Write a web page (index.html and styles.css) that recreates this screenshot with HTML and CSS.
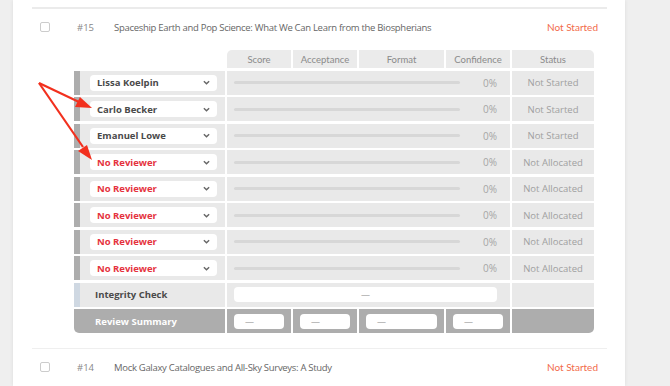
FILE: index.html
```html
<!DOCTYPE html>
<html lang="en">
<head>
    <meta charset="UTF-8">
    <meta name="viewport" content="width=device-width, initial-scale=1.0">
    <title>Submissions</title>
    <link rel="stylesheet" href="styles.css">
</head>
<body>
    <div class="page">
        <div class="card">
            <div class="item">
                <div class="item-head">
                    <span class="check"></span>
                    <span class="num">#15</span>
                    <span class="title">Spaceship Earth and Pop Science: What We Can Learn from the Biospherians</span>
                    <span class="state">Not Started</span>
                </div>

                <div class="review-grid">
                    <div class="blank"></div>
                    <div class="head first">Score</div>
                    <div class="head">Acceptance</div>
                    <div class="head">Format</div>
                    <div class="head">Confidence</div>
                    <div class="head last">Status</div>

                    <div class="reviewer"><div class="select">Lissa Koelpin<svg viewBox="0 0 8 5"><polyline points="1,1 4,4 7,1"/></svg></div></div>
                    <div class="progress"><span class="bar"></span><span class="pct">0%</span></div>
                    <div class="status">Not Started</div>

                    <div class="reviewer"><div class="select">Carlo Becker<svg viewBox="0 0 8 5"><polyline points="1,1 4,4 7,1"/></svg></div></div>
                    <div class="progress"><span class="bar"></span><span class="pct">0%</span></div>
                    <div class="status">Not Started</div>

                    <div class="reviewer"><div class="select">Emanuel Lowe<svg viewBox="0 0 8 5"><polyline points="1,1 4,4 7,1"/></svg></div></div>
                    <div class="progress"><span class="bar"></span><span class="pct">0%</span></div>
                    <div class="status">Not Started</div>

                    <div class="reviewer"><div class="select none">No Reviewer<svg viewBox="0 0 8 5"><polyline points="1,1 4,4 7,1"/></svg></div></div>
                    <div class="progress"><span class="bar"></span><span class="pct">0%</span></div>
                    <div class="status">Not Allocated</div>

                    <div class="reviewer"><div class="select none">No Reviewer<svg viewBox="0 0 8 5"><polyline points="1,1 4,4 7,1"/></svg></div></div>
                    <div class="progress"><span class="bar"></span><span class="pct">0%</span></div>
                    <div class="status">Not Allocated</div>

                    <div class="reviewer"><div class="select none">No Reviewer<svg viewBox="0 0 8 5"><polyline points="1,1 4,4 7,1"/></svg></div></div>
                    <div class="progress"><span class="bar"></span><span class="pct">0%</span></div>
                    <div class="status">Not Allocated</div>

                    <div class="reviewer"><div class="select none">No Reviewer<svg viewBox="0 0 8 5"><polyline points="1,1 4,4 7,1"/></svg></div></div>
                    <div class="progress"><span class="bar"></span><span class="pct">0%</span></div>
                    <div class="status">Not Allocated</div>

                    <div class="reviewer"><div class="select none">No Reviewer<svg viewBox="0 0 8 5"><polyline points="1,1 4,4 7,1"/></svg></div></div>
                    <div class="progress"><span class="bar"></span><span class="pct">0%</span></div>
                    <div class="status">Not Allocated</div>

                    <div class="reviewer integrity">Integrity Check</div>
                    <div class="progress"><span class="box wide">&mdash;</span></div>
                    <div class="status"></div>

                    <div class="summary label">Review Summary</div>
                    <div class="summary"><span class="box">&mdash;</span></div>
                    <div class="summary"><span class="box">&mdash;</span></div>
                    <div class="summary"><span class="box">&mdash;</span></div>
                    <div class="summary"><span class="box">&mdash;</span></div>
                    <div class="summary end"></div>
                </div>
            </div>

            <div class="item">
                <div class="item-head">
                    <span class="check"></span>
                    <span class="num">#14</span>
                    <span class="title">Mock Galaxy Catalogues and All-Sky Surveys: A Study</span>
                    <span class="state">Not Started</span>
                </div>
            </div>
        </div>

        <!-- annotation arrows -->
        <svg class="arrows" width="670" height="386" viewBox="0 0 670 386">
            <line x1="39" y1="83" x2="79" y2="102"/>
            <polygon points="92,108 75,107 80,97"/>
            <line x1="39" y1="83" x2="83" y2="147"/>
            <polygon points="92,160 78,151 87,145"/>
        </svg>
    </div>
</body>
</html>
```

FILE: styles.css
```css
body {
    margin: 0;
    background-color: #efefef;
    font-family: 'Open Sans', 'Noto Sans', Arial, sans-serif;
    color: #666;
}
.page {
    position: relative;
    width: 670px;
    height: 386px;
    overflow: hidden;
}
.card {
    background-color: #fff;
    margin-left: 13px;
    width: 612px;
    height: 386px;
    padding: 7px 18px 0 19px;
    box-sizing: border-box;
    box-shadow: 0 0 4px rgba(0, 0, 0, 0.08);
}
.item {
    border-top: 2px solid #ebebeb;
    padding-bottom: 15px;
}
.item + .item {
    border-top: 1px solid #efefef;
}
.item-head {
    display: flex;
    align-items: center;
    height: 36px;
    font-size: 9.5px;
    letter-spacing: -0.3px;
}
.check {
    width: 8px;
    height: 8px;
    border: 1px solid #ccc;
    border-radius: 2px;
    margin-left: 8px;
}
.num {
    margin-left: 27px;
    width: 37px;
    color: #888;
    letter-spacing: 0;
}
.title {
    flex: 1;
    color: #666;
}
.state {
    font-family: Lato, 'Open Sans', sans-serif;
    font-size: 10px;
    letter-spacing: 0;
    color: #f26b4a;
    margin-right: 9px;
}

/* reviewer table */
.review-grid {
    display: grid;
    grid-template-columns: 151px 64px 64px 85px 64px 82px;
    grid-template-rows: 18px repeat(10, 24px);
    column-gap: 2px;
    row-gap: 2.5px;
    margin: 5px 0 0 42px;
    font-size: 9.5px;
}
.review-grid .head {
    background-color: #ebebeb;
    color: #8a8a8a;
    font-family: Lato, 'Open Sans', sans-serif;
    font-size: 9.5px;
    display: flex;
    align-items: center;
    justify-content: center;
}
.review-grid .head.first {
    border-top-left-radius: 5px;
}
.review-grid .head.last {
    border-top-right-radius: 5px;
}
.reviewer {
    background-color: #e9e9e9;
    border-left: 6px solid #adadad;
    display: flex;
    align-items: center;
    padding-left: 10px;
}
.reviewer.integrity {
    border-left-color: #cfd8e2;
    padding-left: 15px;
    font-weight: bold;
    color: #4a4a4a;
}
.select {
    width: 113px;
    height: 16px;
    background-color: #fff;
    border-radius: 4px;
    display: flex;
    align-items: center;
    justify-content: space-between;
    padding: 0 7px;
    font-weight: bold;
    color: #4a4a4a;
}
.select.none {
    color: #e5323e;
}
.select svg {
    width: 7px;
    height: 5px;
    fill: none;
    stroke: #666;
    stroke-width: 1.6;
}
.progress {
    grid-column: span 4;
    background-color: #e9e9e9;
    display: flex;
    align-items: center;
    padding: 0 13px 0 7px;
}
.bar {
    width: 226px;
    height: 3px;
    border-radius: 2px;
    background-color: #d7d7d7;
}
.pct {
    margin-left: auto;
    color: #a5a5a5;
    font-size: 10px;
}
.status {
    background-color: #e9e9e9;
    display: flex;
    align-items: center;
    justify-content: center;
    color: #a0a0a0;
}
.box {
    display: flex;
    align-items: center;
    justify-content: center;
    height: 15px;
    background-color: #fff;
    border-radius: 4px;
    color: #888;
    font-size: 9px;
}
.box.wide {
    width: 269px;
}
.summary {
    background-color: #adadad;
    display: flex;
    align-items: center;
    padding: 0 7px;
}
.summary .box {
    flex: 1;
    justify-content: flex-start;
    padding-left: 11px;
}
.summary.label {
    padding-left: 21px;
    color: #fff;
    font-weight: bold;
    border-bottom-left-radius: 5px;
}
.summary.end {
    border-bottom-right-radius: 5px;
}
.arrows {
    position: absolute;
    left: 0;
    top: 0;
}
.arrows line {
    stroke: #f2301e;
    stroke-width: 2.2;
}
.arrows polygon {
    fill: #f2301e;
}
```
